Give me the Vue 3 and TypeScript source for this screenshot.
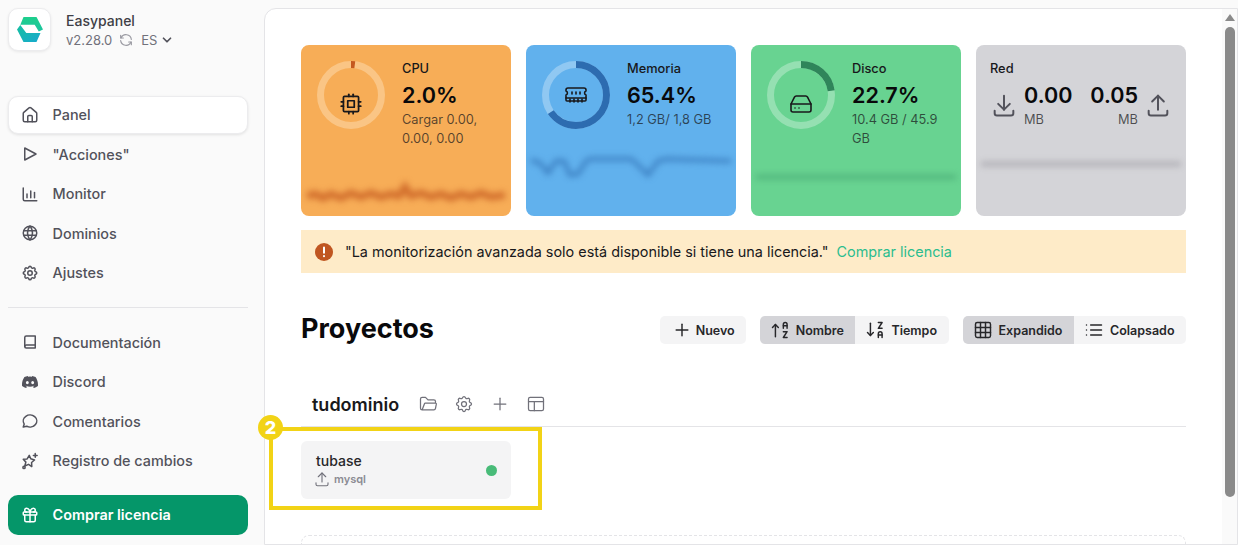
<script setup lang="ts">
import { h } from 'vue';

const ICONS: Record<string, string[]> = {
  home: [
    'M15 21v-7a1.5 1.5 0 0 0-1.5-1.5h-3A1.5 1.5 0 0 0 9 14v7',
    'M3 10a2 2 0 0 1 .7-1.5l7-6a2 2 0 0 1 2.6 0l7 6A2 2 0 0 1 21 10v9a2 2 0 0 1-2 2H5a2 2 0 0 1-2-2z',
  ],
  play: ['M5 4v16l15-8z'],
  chart: ['M3 4v15a2 2 0 0 0 2 2h16', 'M8 17v-5', 'M13 17V8', 'M18 17v-7'],
  globe: ['M3 12a9 9 0 1 0 18 0a9 9 0 0 0-18 0', 'M3.6 9h16.8', 'M3.6 15h16.8', 'M11.5 3a17 17 0 0 0 0 18', 'M12.5 3a17 17 0 0 1 0 18'],
  gear: [
    'M10.325 4.317c.426-1.756 2.924-1.756 3.35 0a1.724 1.724 0 0 0 2.573 1.066c1.543-.94 3.31.826 2.37 2.37a1.724 1.724 0 0 0 1.065 2.572c1.756.426 1.756 2.924 0 3.35a1.724 1.724 0 0 0-1.066 2.573c.94 1.543-.826 3.31-2.37 2.37a1.724 1.724 0 0 0-2.572 1.065c-.426 1.756-2.924 1.756-3.35 0a1.724 1.724 0 0 0-2.573-1.066c-1.543.94-3.31-.826-2.37-2.37a1.724 1.724 0 0 0-1.065-2.572c-1.756-.426-1.756-2.924 0-3.35a1.724 1.724 0 0 0 1.066-2.573c-.94-1.543.826-3.31 2.37-2.37c1 .608 2.296.07 2.572-1.065z',
    'M9 12a3 3 0 1 0 6 0a3 3 0 0 0-6 0',
  ],
  book: ['M19 4v16H7a2 2 0 0 1-2-2V6a2 2 0 0 1 2-2z', 'M19 16H7a2 2 0 0 0-2 2'],
  message: ['M3 20l1.3-3.9c-2.324-3.437-1.426-7.872 2.1-10.374 3.526-2.501 8.59-2.296 11.845.48 3.255 2.777 3.695 7.266 1.029 10.501-2.666 3.235-7.615 4.215-11.574 2.293L3 20'],
  sparkle: [
    'M11 4.5l2 4.6 5 1.6-3.9 3.3.3 5.5-4.4-3-5 2.2 1.5-5.2L3 9.6l5.2-.4z',
    'M19 2v5',
    'M16.5 4.5h5',
    'M2.5 20.5a1.5 1.5 0 1 0 3 0a1.5 1.5 0 0 0-3 0',
  ],
  gift: [
    'M3 9a1 1 0 0 1 1-1h16a1 1 0 0 1 1 1v2a1 1 0 0 1-1 1H4a1 1 0 0 1-1-1z',
    'M12 8v13',
    'M19 12v7a2 2 0 0 1-2 2H7a2 2 0 0 1-2-2v-7',
    'M7.5 8a2.5 2.5 0 0 1 0-5A4.8 8 0 0 1 12 8a4.8 8 0 0 1 4.5-5a2.5 2.5 0 0 1 0 5',
  ],
  refresh: ['M20 11A8.1 8.1 0 0 0 4.5 9', 'M4 5v4h4', 'M4 13a8.1 8.1 0 0 0 15.5 2', 'M20 19v-4h-4'],
  chevron: ['M6 9l6 6 6-6'],
  cpu: [
    'M5 6a1 1 0 0 1 1-1h12a1 1 0 0 1 1 1v12a1 1 0 0 1-1 1H6a1 1 0 0 1-1-1z',
    'M9 9h6v6H9z',
    'M3 10h2', 'M3 14h2', 'M10 3v2', 'M14 3v2', 'M21 10h-2', 'M21 14h-2', 'M14 21v-2', 'M10 21v-2',
  ],
  memory: [
    'M6 19v-3', 'M10 19v-3', 'M14 19v-3', 'M18 19v-3', 'M8 11V9', 'M16 11V9', 'M12 11V9', 'M2 15h20',
    'M2 7a2 2 0 0 1 2-2h16a2 2 0 0 1 2 2v1.1a2 2 0 0 0 0 3.837V17a1 1 0 0 1-1 1H3a1 1 0 0 1-1-1v-5.1a2 2 0 0 0 0-3.837Z',
  ],
  disk: [
    'M22 12H2',
    'M5.45 5.11 2 12v6a2 2 0 0 0 2 2h16a2 2 0 0 0 2-2v-6l-3.45-6.89A2 2 0 0 0 16.76 4H7.24a2 2 0 0 0-1.79 1.11z',
    'M6 16h.01', 'M10 16h.01',
  ],
  download: ['M4 17v2a2 2 0 0 0 2 2h12a2 2 0 0 0 2-2v-2', 'M7 11l5 5 5-5', 'M12 4v12'],
  upload: ['M4 17v2a2 2 0 0 0 2 2h12a2 2 0 0 0 2-2v-2', 'M7 9l5-5 5 5', 'M12 4v12'],
  plus: ['M12 5v14', 'M5 12h14'],
  sortAsc: ['M16 10V5.5c0-1.6.7-2.5 2.25-2.5s2.25.9 2.25 2.5V10', 'M20.5 7H16', 'M20.5 21H16l4.5-7H16', 'M3 9l3.5-3.5L10 9', 'M6.5 5.5V20'],
  sortDesc: ['M16 3h4.5L16 10h4.5', 'M16 21v-4.5c0-1.6.7-2.5 2.25-2.5s2.25.9 2.25 2.5V21', 'M20.5 18H16', 'M3 15l3.5 3.5L10 15', 'M6.5 18.5V4'],
  grid: ['M3 5a2 2 0 0 1 2-2h14a2 2 0 0 1 2 2v14a2 2 0 0 1-2 2H5a2 2 0 0 1-2-2z', 'M3 9h18', 'M3 15h18', 'M9 3v18', 'M15 3v18'],
  list: ['M8 6h13', 'M8 12h13', 'M8 18h13', 'M3 6v.01', 'M3 12v.01', 'M3 18v.01'],
  folder: ['M5 19l2.757-7.351A1 1 0 0 1 8.693 11H21a1 1 0 0 1 .986 1.164l-.996 5.211A2 2 0 0 1 19.026 19H5a2 2 0 0 1-2-2V6a2 2 0 0 1 2-2h4l3 3h7a2 2 0 0 1 2 2v2'],
  layout: ['M3 6a2 2 0 0 1 2-2h14a2 2 0 0 1 2 2v12a2 2 0 0 1-2 2H5a2 2 0 0 1-2-2z', 'M3 9h18', 'M10 9v11'],
};

const DISCORD =
  'M20.317 4.37a19.79 19.79 0 0 0-4.885-1.515.074.074 0 0 0-.079.037c-.211.375-.445.865-.608 1.25a18.27 18.27 0 0 0-5.487 0 12.64 12.64 0 0 0-.618-1.25.077.077 0 0 0-.079-.037A19.74 19.74 0 0 0 3.677 4.37a.07.07 0 0 0-.032.028C.533 9.046-.319 13.58.099 18.058a.082.082 0 0 0 .031.056c2.053 1.508 4.041 2.423 5.993 3.03a.078.078 0 0 0 .084-.028c.462-.63.873-1.295 1.226-1.994a.076.076 0 0 0-.042-.106 13.1 13.1 0 0 1-1.872-.892.077.077 0 0 1-.008-.128c.126-.094.252-.192.372-.291a.074.074 0 0 1 .078-.011c3.928 1.793 8.18 1.793 12.061 0a.074.074 0 0 1 .079.01c.12.099.246.198.373.292a.077.077 0 0 1-.007.128c-.598.349-1.22.645-1.873.891a.077.077 0 0 0-.041.107c.361.698.772 1.363 1.225 1.993a.076.076 0 0 0 .084.029c1.961-.607 3.95-1.522 6.002-3.03a.077.077 0 0 0 .032-.055c.5-5.177-.838-9.674-3.549-13.66a.061.061 0 0 0-.031-.029zM8.02 15.331c-1.183 0-2.157-1.086-2.157-2.419 0-1.333.956-2.419 2.157-2.419 1.211 0 2.176 1.095 2.157 2.419 0 1.333-.956 2.419-2.157 2.419zm7.975 0c-1.183 0-2.157-1.086-2.157-2.419 0-1.333.955-2.419 2.157-2.419 1.211 0 2.176 1.095 2.157 2.419 0 1.333-.946 2.419-2.157 2.419z';

// small helper so the templates stay readable
function Icon(props: { name: string; size?: number; stroke?: number }) {
  const size = props.size ?? 18;
  return h(
    'svg',
    {
      width: size,
      height: size,
      viewBox: '0 0 24 24',
      fill: 'none',
      stroke: 'currentColor',
      'stroke-width': props.stroke ?? 2,
      'stroke-linecap': 'round',
      'stroke-linejoin': 'round',
      style: { flexShrink: 0, display: 'block' },
    },
    (ICONS[props.name] ?? []).map((d) => h('path', { d })),
  );
}

const RADIUS = 30.5;
const CIRCUMFERENCE = 2 * Math.PI * RADIUS;

const mainNav = [
  { label: 'Panel', icon: 'home', active: true },
  { label: '"Acciones"', icon: 'play' },
  { label: 'Monitor', icon: 'chart' },
  { label: 'Dominios', icon: 'globe' },
  { label: 'Ajustes', icon: 'gear' },
];

const linkNav = [
  { label: 'Documentación', icon: 'book' },
  { label: 'Discord', icon: 'discord' },
  { label: 'Comentarios', icon: 'message' },
  { label: 'Registro de cambios', icon: 'sparkle' },
];

const cpuLine = '6,49 14,47 22,51 30,47 40,51 50,46 60,50 70,46 80,50 90,47 98,49 104,40 110,49 120,46 130,50 140,47 150,51 160,47 170,50 180,46 190,50 204,48';
const memLine = '5,13 14,16 22,26 30,14 38,14 44,28 52,27 60,14 64,12 105,12 112,18 122,28 132,14 140,12 205,14';

const stats = [
  { key: 'cpu', label: 'CPU', value: '2.0%', sub: 'Cargar 0.00, 0.00, 0.00', pct: 2, icon: 'cpu', iconSize: 26, low: true, color: '#f7ad57', dark: '#c5591f', track: '#fac585', line: cpuLine, lineWidth: 7, lineOpacity: 0.75 },
  { key: 'mem', label: 'Memoria', value: '65.4%', sub: '1,2 GB/ 1,8 GB', pct: 65.4, icon: 'memory', iconSize: 24, low: false, color: '#61b1ed', dark: '#2d6cb0', track: '#90c8f2', line: memLine, lineWidth: 3.5, lineOpacity: 0.8 },
  { key: 'disk', label: 'Disco', value: '22.7%', sub: '10.4 GB / 45.9 GB', pct: 22.7, icon: 'disk', iconSize: 24, low: true, color: '#68d391', dark: '#2f855a', track: '#95e0b2', line: '5,30 205,30', lineWidth: 4, lineOpacity: 0.45 },
];

const netLine = '5,17 205,17';
</script>

<template>
  <div class="app">
    <aside class="sidebar">
      <div class="brand">
        <div class="logo">
          <svg width="26" height="25" viewBox="0 0 26 25">
            <defs>
              <linearGradient id="logoTop" x1="0" y1="0" x2="0" y2="1">
                <stop offset="0" stop-color="#1ecf8c" />
                <stop offset="1" stop-color="#1cc4a0" />
              </linearGradient>
              <linearGradient id="logoBottom" x1="0" y1="0" x2="1" y2="1">
                <stop offset="0" stop-color="#16c0a0" />
                <stop offset="1" stop-color="#17a9cf" />
              </linearGradient>
            </defs>
            <polygon points="6.5,0 19.5,0 26,12.5 21.8,14.5 17.7,7.7 3.3,7.7" fill="url(#logoTop)" />
            <polygon points="0,12.5 3.3,8 9.3,16 23.5,16 19.5,25 6.5,25" fill="url(#logoBottom)" />
          </svg>
        </div>
        <div class="brand-text">
          <div class="brand-name">Easypanel</div>
          <div class="brand-meta">
            <span>v2.28.0</span>
            <Icon name="refresh" :size="16" :stroke="1.75" class="meta-refresh" />
            <span class="meta-lang">ES</span>
            <Icon name="chevron" :size="14" :stroke="3" class="meta-chevron" />
          </div>
        </div>
      </div>

      <nav class="nav nav-main">
        <a v-for="item in mainNav" :key="item.label" class="nav-item" :class="{ active: item.active }">
          <Icon :name="item.icon" />
          <span>{{ item.label }}</span>
        </a>
      </nav>

      <div class="divider"></div>

      <nav class="nav">
        <a v-for="item in linkNav" :key="item.label" class="nav-item">
          <svg v-if="item.icon === 'discord'" class="discord" width="16" height="16" viewBox="0 0 24 24" fill="currentColor">
            <path :d="DISCORD" />
          </svg>
          <Icon v-else :name="item.icon" />
          <span>{{ item.label }}</span>
        </a>
      </nav>

      <button class="buy">
        <Icon name="gift" />
        <span>Comprar licencia</span>
      </button>
    </aside>

    <main class="panel">
      <div class="content">
        <section class="stats">
          <article v-for="s in stats" :key="s.key" class="stat" :style="{ background: s.color }">
            <div class="stat-top">
              <div class="ring">
                <svg width="68" height="68" viewBox="0 0 68 68">
                  <circle cx="34" cy="34" :r="RADIUS" fill="none" :stroke="s.track" stroke-width="7" />
                  <circle
                    cx="34"
                    cy="34"
                    :r="RADIUS"
                    fill="none"
                    :stroke="s.dark"
                    stroke-width="7"
                    :stroke-dasharray="`${(CIRCUMFERENCE * s.pct) / 100} ${CIRCUMFERENCE}`"
                    transform="rotate(-90 34 34)"
                  />
                </svg>
                <div class="ring-icon" :class="{ low: s.low }">
                  <Icon :name="s.icon" :size="s.iconSize" :stroke="1.6" />
                </div>
              </div>
              <div class="stat-text">
                <div class="stat-label">{{ s.label }}</div>
                <div class="stat-value">{{ s.value }}</div>
                <div class="stat-sub">{{ s.sub }}</div>
              </div>
            </div>
            <svg class="stat-chart" viewBox="0 0 210 69" width="210" height="69">
              <polyline :points="s.line" fill="none" :stroke="s.dark" :stroke-width="s.lineWidth" :opacity="s.lineOpacity" />
            </svg>
          </article>

          <article class="stat net">
            <div class="stat-top net-top">
              <div class="stat-label">Red</div>
              <div class="net-row">
                <Icon name="download" :size="28" :stroke="1.7" class="net-icon" />
                <div class="net-block">
                  <div class="stat-value">0.00</div>
                  <div class="stat-sub">MB</div>
                </div>
                <div class="net-block right">
                  <div class="stat-value">0.05</div>
                  <div class="stat-sub">MB</div>
                </div>
                <Icon name="upload" :size="28" :stroke="1.7" class="net-icon" />
              </div>
            </div>
            <svg class="stat-chart" viewBox="0 0 210 69" width="210" height="69">
              <polyline :points="netLine" fill="none" stroke="#8e8c95" stroke-width="4" opacity="0.6" />
            </svg>
          </article>
        </section>

        <div class="notice">
          <svg class="notice-icon" width="18" height="18" viewBox="0 0 18 18">
            <circle cx="9" cy="9" r="9" fill="#c05621" />
            <path d="M9 4.6v5.2M9 12.9v.3" stroke="#fff" stroke-width="2" stroke-linecap="round" />
          </svg>
          <span class="notice-text">"La monitorización avanzada solo está disponible si tiene una licencia."</span>
          <a class="notice-link">Comprar licencia</a>
        </div>

        <header class="projects-head">
          <h1>Proyectos</h1>
          <div class="toolbar">
            <button class="tool single"><Icon name="plus" :size="20" :stroke="1.75" />Nuevo</button>
            <div class="tool-group">
              <button class="tool on"><Icon name="sortAsc" :size="20" :stroke="1.75" />Nombre</button>
              <button class="tool"><Icon name="sortDesc" :size="20" :stroke="1.75" />Tiempo</button>
            </div>
            <div class="tool-group">
              <button class="tool on"><Icon name="grid" :size="20" :stroke="1.75" />Expandido</button>
              <button class="tool"><Icon name="list" :size="20" :stroke="1.75" />Colapsado</button>
            </div>
          </div>
        </header>

        <div class="project-head">
          <h2>tudominio</h2>
          <div class="project-actions">
            <Icon name="folder" :size="20" :stroke="1.5" />
            <Icon name="gear" :size="20" :stroke="1.5" />
            <Icon name="plus" :size="20" :stroke="1.5" />
            <Icon name="layout" :size="20" :stroke="1.5" />
          </div>
        </div>

        <div class="services">
          <div class="service">
            <div class="service-info">
              <div class="service-name">tubase</div>
              <div class="service-kind">
                <Icon name="upload" :size="18" :stroke="1.5" />
                <span>mysql</span>
              </div>
            </div>
            <span class="service-dot"></span>
          </div>
        </div>

        <div class="dropzone"></div>

        <div class="highlight">
          <span class="highlight-badge">2</span>
        </div>
      </div>

      <div class="scrollbar">
        <span class="scroll-arrow"></span>
        <span class="scroll-thumb"></span>
      </div>
    </main>
  </div>
</template>

<style>
html,
body {
  margin: 0;
  background: #fafafa;
}
</style>

<style scoped>
* {
  box-sizing: border-box;
}

.app {
  display: flex;
  width: 1238px;
  height: 545px;
  overflow: hidden;
  background: #fafafa;
  font-family: Inter, 'Liberation Sans', sans-serif;
  color: #27272a;
}

.sidebar {
  width: 264px;
  flex-shrink: 0;
  padding: 8px 16px 0 8px;
  display: flex;
  flex-direction: column;
}

.brand {
  display: flex;
  gap: 15px;
  height: 44px;
}

.logo {
  width: 43px;
  height: 43px;
  background: #fff;
  border: 1px solid #ececee;
  border-radius: 10px;
  box-shadow: 0 1px 3px rgba(0, 0, 0, 0.08);
  display: flex;
  align-items: center;
  justify-content: center;
}

.brand-name {
  font-size: 14px;
  font-weight: 500;
  line-height: 20px;
  margin-top: 3px;
  color: #3f3f46;
}

.brand-meta {
  display: flex;
  align-items: center;
  font-size: 13px;
  line-height: 20px;
  color: #71717a;
  margin-top: -1px;
}

.meta-refresh {
  margin-left: 6px;
  color: #9a9aa2;
}

.meta-lang {
  margin-left: 7px;
}

.meta-chevron {
  margin-left: 3px;
  color: #52525b;
}

.nav {
  display: flex;
  flex-direction: column;
  gap: 2px;
}

.nav-main {
  margin-top: 44px;
}

.nav-item {
  height: 37.5px;
  padding: 0 12px;
  display: flex;
  align-items: center;
  gap: 13.6px;
  font-size: 14.4px;
  font-weight: 500;
  color: #52525b;
  border: 1px solid transparent;
  border-radius: 10px;
}

.nav-item.active {
  background: #fff;
  border-color: #ececee;
  box-shadow: 0 1px 3px rgba(0, 0, 0, 0.1);
}

.discord {
  flex-shrink: 0;
  margin: 0 1px;
}

.divider {
  height: 1px;
  background: #e4e4e7;
  margin: 15px 0 16px;
}

.buy {
  margin-top: 15px;
  height: 40px;
  padding: 0 13px;
  display: flex;
  align-items: center;
  gap: 13.6px;
  border: none;
  border-radius: 10px;
  background: #059669;
  color: #fff;
  font: 600 14.4px Inter, 'Liberation Sans', sans-serif;
}

.panel {
  flex: 1;
  min-width: 0;
  margin-top: 8px;
  display: flex;
  background: #fff;
  border: 1px solid #e4e4e7;
  border-top-left-radius: 12px;
}

.content {
  position: relative;
  flex: 1;
  min-width: 0;
  padding: 36px 36px 0;
}

.stats,
.services {
  display: grid;
  grid-template-columns: repeat(4, 1fr);
  gap: 15px;
}

.stat {
  height: 171px;
  border-radius: 8px;
  overflow: hidden;
  display: flex;
  flex-direction: column;
}

.stat-top {
  height: 102px;
  padding: 16px 0 0 16px;
  display: flex;
  gap: 17px;
}

.ring {
  position: relative;
  width: 68px;
  height: 68px;
  flex-shrink: 0;
}

.ring-icon {
  position: absolute;
  inset: 0;
  display: flex;
  align-items: center;
  justify-content: center;
  color: #18181b;
}

.ring-icon.low {
  padding-top: 18px;
}

.stat-text {
  flex: 1;
  min-width: 0;
  padding-right: 20px;
}

.stat-label {
  font-size: 12.8px;
  font-weight: 500;
  line-height: 16px;
  color: #18181b;
}

.stat-value {
  font-size: 21.6px;
  font-weight: 600;
  line-height: 30px;
  margin-top: 3px;
  color: #09090b;
}

.stat-sub {
  font-size: 12.8px;
  line-height: 19px;
  margin-top: 0;
  color: rgba(24, 24, 27, 0.72);
}

.stat-chart {
  display: block;
  filter: blur(3px);
}

.net {
  background: #d4d4d8;
}

.net-top {
  flex-direction: column;
  gap: 0;
  padding: 16px 14px 0;
}

.net-row {
  display: flex;
  align-items: flex-start;
}

.net-icon {
  margin-top: 14px;
  color: #52525b;
}

.net-block {
  margin-left: 6px;
}

.net-block.right {
  margin-left: auto;
  margin-right: 6px;
  text-align: right;
}

.notice {
  margin-top: 14px;
  height: 43px;
  padding: 0 14px;
  display: flex;
  align-items: center;
  background: #feebc8;
  font-size: 14.4px;
  color: #18181b;
}

.notice-icon {
  flex-shrink: 0;
}

.notice-text {
  margin-left: 12px;
}

.notice-link {
  margin-left: 8px;
  color: #2bbd8e;
}

.projects-head {
  margin-top: 43px;
  height: 28px;
  display: flex;
  align-items: center;
  justify-content: space-between;
}

h1 {
  margin: 0 0 3px;
  font-size: 27px;
  font-weight: 700;
  color: #09090b;
}

.toolbar {
  display: flex;
  gap: 14px;
}

.tool-group {
  display: flex;
  border-radius: 5px;
  overflow: hidden;
}

.tool {
  height: 28px;
  padding: 0 11.5px 0 10px;
  display: flex;
  align-items: center;
  gap: 6px;
  border: none;
  background: #f4f4f5;
  color: #27272a;
  font: 600 12.5px Inter, 'Liberation Sans', sans-serif;
}

.tool.single {
  padding: 0 11px 0 12px;
  gap: 4px;
  border-radius: 5px;
}

.tool.on {
  background: #d4d4d8;
}

.project-head {
  margin-top: 40px;
  height: 43px;
  padding: 0 0 2px 11px;
  display: flex;
  align-items: center;
  border-bottom: 1px solid #e4e4e7;
}

h2 {
  margin: 0;
  font-size: 18px;
  font-weight: 600;
  color: #18181b;
}

.project-actions {
  display: flex;
  gap: 16px;
  margin-left: 19px;
  color: #71717a;
}

.services {
  margin-top: 14px;
}

.service {
  height: 58px;
  padding: 0 14px 0 15px;
  display: flex;
  align-items: center;
  justify-content: space-between;
  background: #f4f4f5;
  border-radius: 6px;
}

.service-info {
  margin-top: -1px;
}

.service-name {
  font-size: 14px;
  font-weight: 500;
  line-height: 20px;
  color: #27272a;
}

.service-kind {
  display: flex;
  align-items: center;
  gap: 3px;
  margin: -1px 0 0 -3px;
  font-size: 11px;
  font-weight: 600;
  line-height: 16px;
  color: #8b8b93;
}

.service-kind svg {
  color: #71717a;
}

.service-dot {
  width: 11px;
  height: 11px;
  border-radius: 50%;
  background: #48bb78;
}

.dropzone {
  margin-top: 36px;
  height: 9px;
  border: 1px dashed #e4e4e7;
  border-bottom: none;
  border-radius: 8px 8px 0 0;
}

/* callout drawn over the screenshot */
.highlight {
  position: absolute;
  left: 4px;
  top: 418px;
  width: 273px;
  height: 83px;
  border: 4px solid #f2d316;
}

.highlight-badge {
  position: absolute;
  left: -15px;
  top: -16px;
  width: 25px;
  height: 25px;
  border-radius: 50%;
  background: #f2d316;
  color: #fff;
  font-size: 18px;
  font-weight: 800;
  line-height: 25px;
  text-align: center;
}

.scrollbar {
  width: 15px;
  flex-shrink: 0;
  padding-top: 5px;
  display: flex;
  flex-direction: column;
  align-items: center;
  background: #fafafa;
}

.scroll-arrow {
  width: 0;
  height: 0;
  border-left: 5px solid transparent;
  border-right: 5px solid transparent;
  border-bottom: 7px solid #8a8a8a;
}

.scroll-thumb {
  width: 10px;
  height: 470px;
  margin-top: 6px;
  border-radius: 5px;
  background: #8a8a8a;
}
</style>
